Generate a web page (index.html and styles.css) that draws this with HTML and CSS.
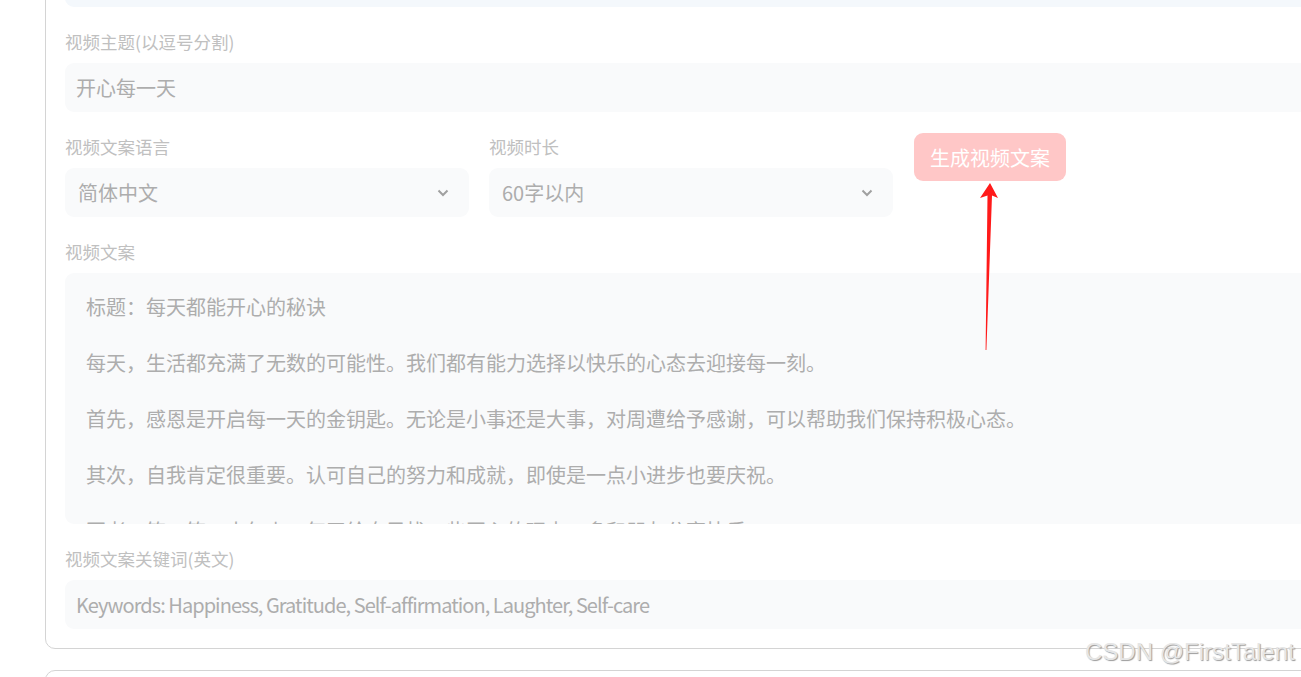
FILE: index.html
```html
<!DOCTYPE html>
<html lang="zh-CN">
<head>
    <meta charset="UTF-8">
    <meta name="viewport" content="width=device-width, initial-scale=1.0">
    <title>视频文案生成</title>
    <link rel="stylesheet" href="styles.css">
</head>
<body>
    <div class="page">
        <div class="card">
            <div class="field">
                <div class="input focused"></div>
            </div>

            <div class="field">
                <label class="label">视频主题(以逗号分割)</label>
                <div class="input">开心每一天</div>
            </div>

            <div class="row">
                <div class="field select-field">
                    <label class="label">视频文案语言</label>
                    <div class="select">
                        <span>简体中文</span>
                        <svg class="chevron" width="12" height="8" viewBox="0 0 12 8"><path d="M1.5 1.5l4.5 4.5 4.5-4.5" fill="none" stroke="#a0a0a0" stroke-width="2"/></svg>
                    </div>
                </div>
                <div class="field select-field">
                    <label class="label">视频时长</label>
                    <div class="select">
                        <span>60字以内</span>
                        <svg class="chevron" width="12" height="8" viewBox="0 0 12 8"><path d="M1.5 1.5l4.5 4.5 4.5-4.5" fill="none" stroke="#a0a0a0" stroke-width="2"/></svg>
                    </div>
                </div>
                <button class="gen-button">生成视频文案</button>
            </div>

            <div class="field">
                <label class="label">视频文案</label>
                <div class="textarea">
                    <p>标题：每天都能开心的秘诀</p>
                    <p>每天，生活都充满了无数的可能性。我们都有能力选择以快乐的心态去迎接每一刻。</p>
                    <p>首先，感恩是开启每一天的金钥匙。无论是小事还是大事，对周遭给予感谢，可以帮助我们保持积极心态。</p>
                    <p>其次，自我肯定很重要。认可自己的努力和成就，即使是一点小进步也要庆祝。</p>
                    <p>再者，笑一笑，十年少。每天给自己找一些开心的理由，多和朋友分享快乐。</p>
                </div>
            </div>

            <div class="field">
                <label class="label">视频文案关键词(英文)</label>
                <div class="input keywords">Keywords: Happiness, Gratitude, Self-affirmation, Laughter, Self-care</div>
            </div>
        </div>

        <div class="card next"></div>
    </div>

    <!-- annotation arrow over the screenshot -->
    <svg class="arrow" width="40" height="185" viewBox="0 0 40 185">
        <polygon points="20,8 10,23 17.5,20.5 15.6,175 16.4,175 22,20.5 28,23" fill="#ff1a1a"/>
    </svg>
    <div class="watermark">CSDN @FirstTalent</div>
</body>
</html>
```

FILE: styles.css
```css
body {
    margin: 0;
    background: #ffffff;
    font-family: "Noto Sans CJK SC", "Noto Sans", sans-serif;
    overflow: hidden;
    height: 677px;
}
.page {
    padding-left: 45px;
    width: 1400px;
}
.card {
    margin-top: -63px;
    border: 1px solid #d4d4d4;
    border-radius: 10px;
    padding: 20px 19px 19px 19px;
    display: flex;
    flex-direction: column;
    gap: 24px;
    background: #fff;
}
.card.next {
    margin-top: 21px;
    height: 200px;
    padding: 0;
}
.field {
    display: flex;
    flex-direction: column;
}
.label {
    font-size: 17.5px;
    line-height: 22px;
    color: #c0c0c0;
    margin-bottom: 10px;
}
.input {
    height: 49px;
    box-sizing: border-box;
    background: #f9fafb;
    border-radius: 9px;
    padding: 0 11px;
    display: flex;
    align-items: center;
    font-size: 20px;
    color: #adadad;
}
.input.focused {
    background: #f4f8fc;
}
.input.keywords {
    letter-spacing: -0.95px;
}
.row {
    display: flex;
    gap: 20px;
    align-items: flex-start;
}
.select-field {
    width: 404px;
}
.select {
    height: 49px;
    box-sizing: border-box;
    background: #f9fafb;
    border-radius: 9px;
    padding: 0 20px 0 13px;
    display: flex;
    align-items: center;
    justify-content: space-between;
    font-size: 20px;
    color: #adadad;
}
.chevron {
    display: block;
}
.gen-button {
    margin: -3px 0 0 1px;
    width: 152px;
    height: 48px;
    border: none;
    border-radius: 9px;
    background: #ffc7c7;
    color: #ffffff;
    font-family: inherit;
    font-size: 20px;
    padding: 0;
}
.textarea {
    height: 251px;
    box-sizing: border-box;
    background: #f9fafb;
    border-radius: 9px;
    padding: 20px 21px;
    overflow: hidden;
    font-size: 20px;
    line-height: 28px;
    color: #adadad;
}
.textarea p {
    margin: 0 0 28px 0;
}
.arrow {
    position: absolute;
    left: 970px;
    top: 175px;
}
.watermark {
    position: absolute;
    left: 1085px;
    top: 638px;
    font-family: "Liberation Sans", Arial, sans-serif;
    font-size: 24px;
    color: #e6e6e6;
    text-shadow: 1px 1px 1px #9a9a9a;
}
```
